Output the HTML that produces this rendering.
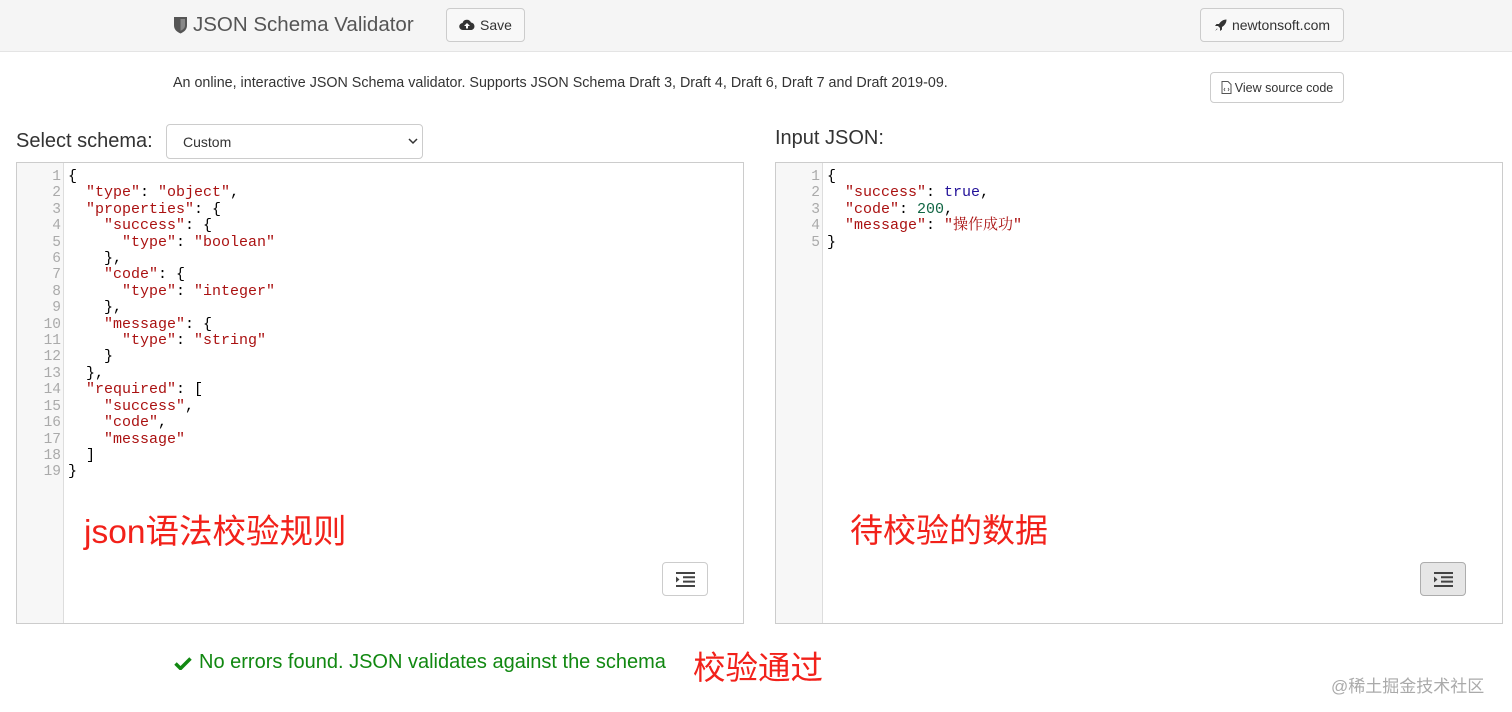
<!DOCTYPE html>
<html><head><meta charset="utf-8"><style>
*{box-sizing:border-box;margin:0;padding:0}
body{width:1512px;height:712px;background:#fff;font-family:"Liberation Sans",Arial,sans-serif;color:#333;position:relative;overflow:hidden}
.hdr{position:absolute;left:0;top:0;width:1512px;height:52px;background:#f5f5f5;border-bottom:1px solid #e4e4e4}
.btn{position:absolute;border:1px solid #ccc;border-radius:4px;background:#f8f8f8;font-size:14px;color:#333;display:flex;align-items:center;justify-content:center;gap:5px}
.abs{position:absolute}
.ed{position:absolute;border:1px solid #ccc;background:#fff}
.gut{position:absolute;left:0;top:0;bottom:0;width:47px;background:#f7f7f7;border-right:1px solid #ddd}
.ln{position:absolute;left:0;width:44px;top:6px;text-align:right;font-family:"Liberation Mono",monospace;font-size:14.5px;line-height:16.4px;color:#aaa}
.code{position:absolute;left:51px;top:6px;font-family:"Liberation Mono",monospace;font-size:15px;line-height:16.4px;color:#000;white-space:pre}
.s{color:#a11}.k{color:#a11}.b{color:#219}.n{color:#164}
.fmt{position:absolute;width:46px;height:34px;border:1px solid #ccc;border-radius:4px;background:#fff}
.red{color:#f2211a;font-family:"Liberation Sans","Noto Sans CJK SC",sans-serif;position:absolute}
</style></head><body>
<div class="hdr"></div>
<div class="abs" style="left:173px;top:13px;font-size:20.5px;color:#555;display:flex;align-items:center;gap:5px">
<svg width="15" height="18" viewBox="0 0 15 18"><path d="M1 1h13v8.5c0 4-3 6.5-6.5 8C4 16 1 13.5 1 9.5z" fill="#555"/><path d="M7.5 3H12v6.5c0 2.5-2 4.2-4.5 5.3z" fill="#888"/></svg>JSON Schema Validator</div>
<div class="btn" style="left:446px;top:8px;width:79px;height:34px"><svg width="16" height="12" viewBox="0 0 16 12"><path d="M4 11a3.5 3.5 0 0 1-.5-7A4.5 4.5 0 0 1 12 3.5 3.8 3.8 0 0 1 12.5 11z" fill="#333"/><path d="M8 4l3 3H9v2.5H7V7H5z" fill="#fff"/></svg>Save</div>
<div class="btn" style="left:1200px;top:8px;width:144px;height:34px"><svg width="13" height="13" viewBox="0 0 13 13"><path d="M12.5.5C9 .5 6.5 2.5 5 5H2.5L1 7h3l2 2v3l2-1.5V8c2.5-1.5 4.5-4 4.5-7.5zM3 9.5L1 12l2.5-2z" fill="#333"/></svg>newtonsoft.com</div>
<div class="abs" style="left:173px;top:75px;font-size:14.3px;color:#333">An online, interactive JSON Schema validator. Supports JSON Schema Draft 3, Draft 4, Draft 6, Draft 7 and Draft 2019-09.</div>
<div class="btn" style="left:1210px;top:72px;width:134px;height:31px;background:#fff;font-size:12.5px;gap:3px"><svg width="11" height="13" viewBox="0 0 11 13"><path d="M1 .5h6l3 3v9H1z" fill="none" stroke="#555"/><path d="M4 7l-1 1.5 1 1.5M7 7l1 1.5-1 1.5" fill="none" stroke="#555" stroke-width=".8"/></svg>View source code</div>
<div class="abs" style="left:16px;top:130px;font-size:20px;color:#333">Select schema:</div>
<div class="abs" style="left:166px;top:124px;width:257px;height:35px;border:1px solid #ccc;border-radius:4px;font-size:14px;padding:9px 0 0 16px">Custom<svg class="abs" style="left:241px;top:13px" width="10" height="7" viewBox="0 0 10 7"><path d="M1 1l4 4 4-4" fill="none" stroke="#333" stroke-width="1.5"/></svg></div>
<div class="abs" style="left:775px;top:127px;font-size:20px;color:#333">Input JSON:</div>
<div class="ed" style="left:16px;top:162px;width:728px;height:462px"><div class="gut"></div>
<div class="ln">1<br>2<br>3<br>4<br>5<br>6<br>7<br>8<br>9<br>10<br>11<br>12<br>13<br>14<br>15<br>16<br>17<br>18<br>19</div>
<div class="code">{
  <span class="k">"type"</span>: <span class="s">"object"</span>,
  <span class="k">"properties"</span>: {
    <span class="k">"success"</span>: {
      <span class="k">"type"</span>: <span class="s">"boolean"</span>
    },
    <span class="k">"code"</span>: {
      <span class="k">"type"</span>: <span class="s">"integer"</span>
    },
    <span class="k">"message"</span>: {
      <span class="k">"type"</span>: <span class="s">"string"</span>
    }
  },
  <span class="k">"required"</span>: [
    <span class="s">"success"</span>,
    <span class="s">"code"</span>,
    <span class="s">"message"</span>
  ]
}</div>
<div class="fmt" style="left:645px;top:399px"><svg class="abs" style="left:13px;top:9px" width="19" height="15" viewBox="0 0 19 15"><path d="M0 1h19M7 5.3h12M7 9.6h12M0 14h19" stroke="#444" stroke-width="2"/><path d="M0 4.5l3.5 3-3.5 3z" fill="#444"/></svg></div>
</div>
<div class="red" style="left:84px;top:504px;font-size:33.5px">json语法校验规则</div>
<div class="ed" style="left:775px;top:162px;width:728px;height:462px"><div class="gut"></div>
<div class="ln">1<br>2<br>3<br>4<br>5</div>
<div class="code">{
  <span class="k">"success"</span>: <span class="b">true</span>,
  <span class="k">"code"</span>: <span class="n">200</span>,
  <span class="k">"message"</span>: <span class="s" style="font-family:'Liberation Mono','Noto Serif CJK SC',monospace">"操作成功"</span>
}</div>
<div class="fmt" style="left:644px;top:399px;background:#e6e6e6;border-color:#adadad"><svg class="abs" style="left:13px;top:9px" width="19" height="15" viewBox="0 0 19 15"><path d="M0 1h19M7 5.3h12M7 9.6h12M0 14h19" stroke="#444" stroke-width="2"/><path d="M0 4.5l3.5 3-3.5 3z" fill="#444"/></svg></div>
</div>
<div class="red" style="left:850px;top:504px;font-size:33px">待校验的数据</div>
<div class="abs" style="left:174px;top:651px;font-size:20px;color:#118811;display:flex;align-items:center;gap:7px"><svg width="18" height="14" viewBox="0 0 18 14"><path d="M1.5 7.5l5 5L16.5 2.5" fill="none" stroke="#118811" stroke-width="3.5"/></svg>No errors found. JSON validates against the schema</div>
<div class="red" style="left:693px;top:642px;font-size:32.5px">校验通过</div>
<div class="abs" style="left:1331px;top:672px;font-size:17px;color:#aaa;font-family:'Liberation Sans','Noto Sans CJK SC',sans-serif">@稀土掘金技术社区</div>
</body></html>
